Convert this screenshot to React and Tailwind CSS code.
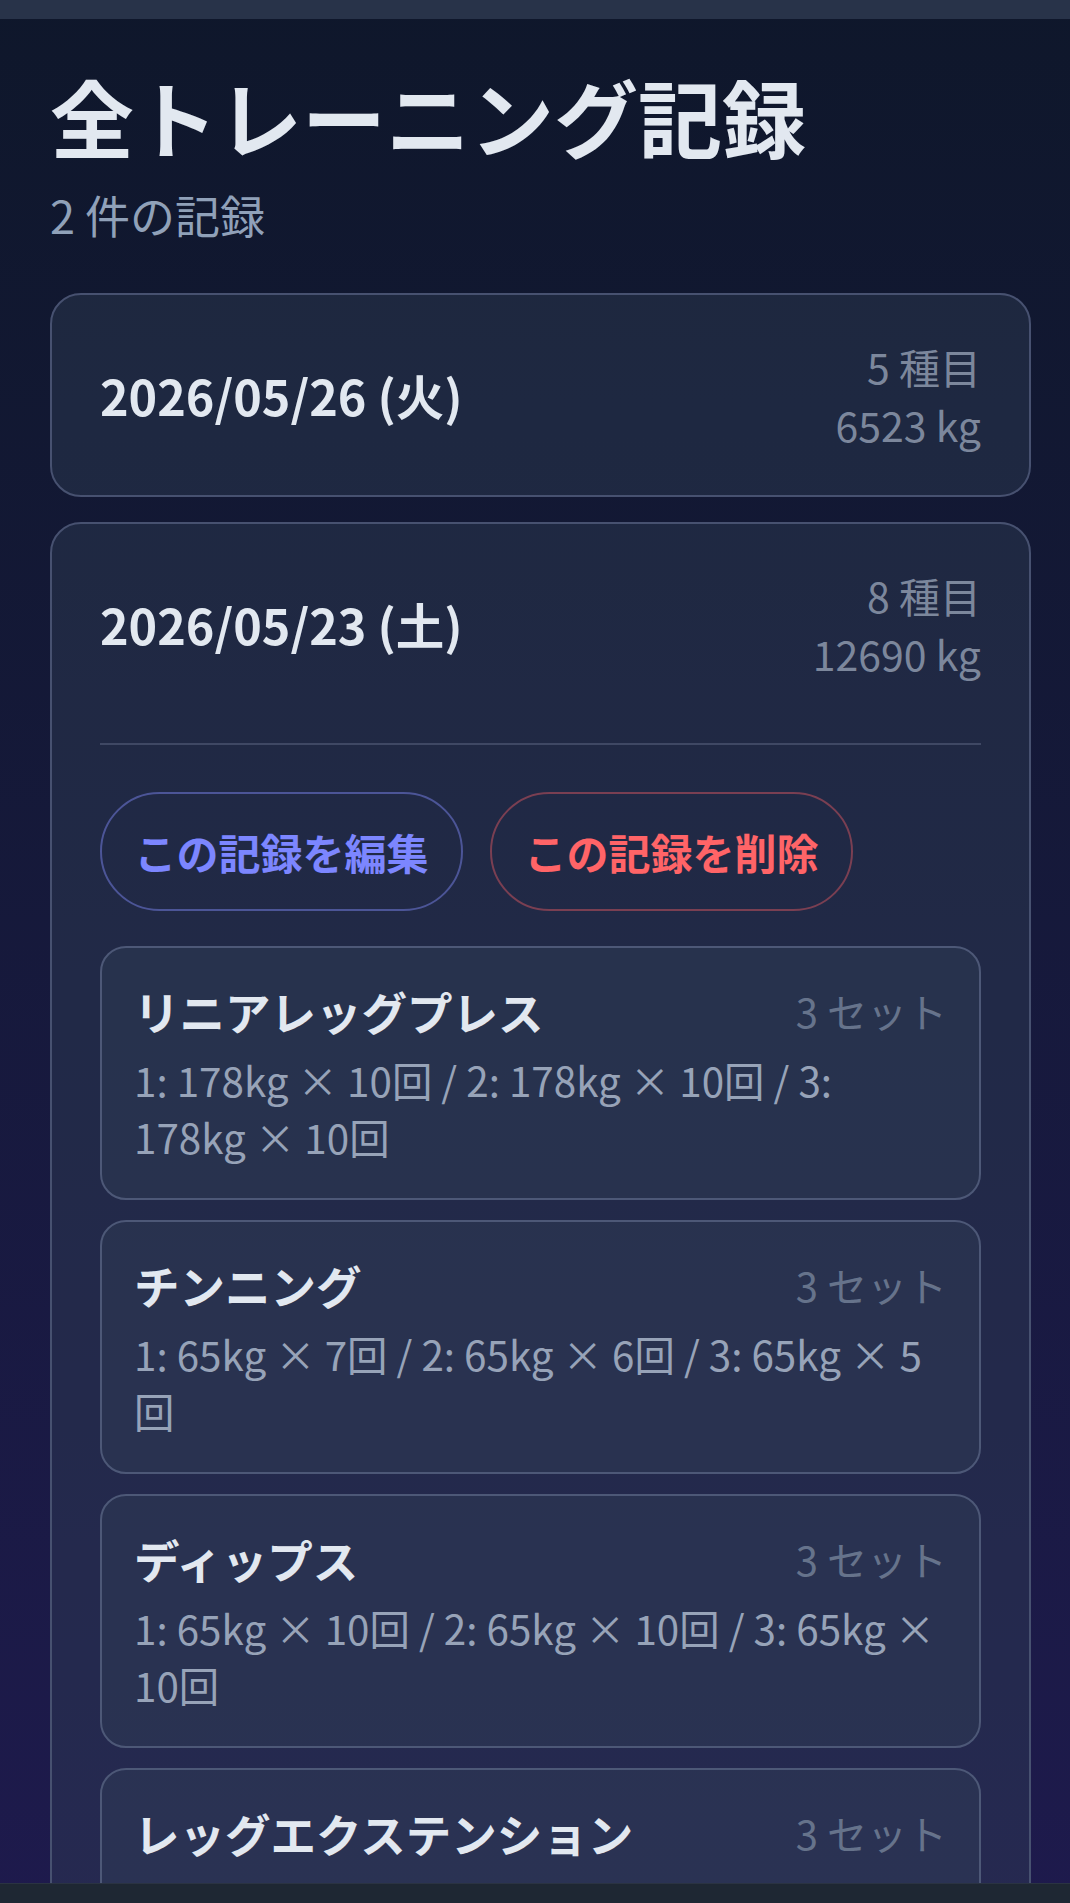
import React from "react";

const sessions = [
  {
    id: "2026-05-26",
    date: "2026/05/26 (火)",
    count: 5,
    volume: 6523,
    open: false,
    exercises: [],
  },
  {
    id: "2026-05-23",
    date: "2026/05/23 (土)",
    count: 8,
    volume: 12690,
    open: true,
    exercises: [
      {
        name: "リニアレッグプレス",
        sets: [
          [178, 10],
          [178, 10],
          [178, 10],
        ],
      },
      {
        name: "チンニング",
        sets: [
          [65, 7],
          [65, 6],
          [65, 5],
        ],
      },
      {
        name: "ディップス",
        sets: [
          [65, 10],
          [65, 10],
          [65, 10],
        ],
      },
      {
        name: "レッグエクステンション",
        sets: [
          [59, 12],
          [59, 12],
          [59, 10],
        ],
      },
    ],
  },
];

function ExerciseCard({ exercise }) {
  const line = exercise.sets
    .map(([kg, reps], i) => `${i + 1}: ${kg}kg × ${reps}回`)
    .join(" / ");
  return (
    <div className="rounded-[26px] border-2 border-[#4d5877] bg-slate-700/40 px-[32px] pt-[32px] pb-[33px]">
      <div className="mb-[9px] flex items-center justify-between">
        <h3 className="text-[45.5px] leading-[62px] font-bold text-slate-200">
          {exercise.name}
        </h3>
        <span className="text-[40px] leading-[62px] text-[#66738b]">
          {exercise.sets.length} セット
        </span>
      </div>
      <p className="text-[40.4px] leading-[57px] text-[#97a3b8]">{line}</p>
    </div>
  );
}

function SessionCard({ session }) {
  return (
    <div className="rounded-[31px] border-2 border-[#475170] bg-slate-700/40">
      <div className="flex items-center justify-between px-[48px] py-[42px]">
        <span className="text-[48.5px] leading-[72px] font-bold text-slate-200">
          {session.date}
        </span>
        <div className="text-right text-[41px] leading-[58px] text-[#7c879c]">
          <div>{session.count} 種目</div>
          <div>{session.volume} kg</div>
        </div>
      </div>
      {session.open && (
        <div className="mx-[48px] mt-[19px] border-t-2 border-[#3f4864] pt-[47px]">
          <div className="flex gap-[27px]">
            <button className="flex h-[119px] w-[363px] items-center justify-center rounded-full border-2 border-[#4c5597] text-[42px] font-bold text-indigo-400">
              この記録を編集
            </button>
            <button className="flex h-[119px] w-[363px] items-center justify-center rounded-full border-2 border-[#7a3f52] text-[42px] font-bold text-red-400">
              この記録を削除
            </button>
          </div>
          <div className="mt-[35px] flex flex-col gap-[20px]">
            {session.exercises.map((ex) => (
              <ExerciseCard key={ex.name} exercise={ex} />
            ))}
          </div>
        </div>
      )}
    </div>
  );
}

export default function App() {
  return (
    <div className="flex h-screen flex-col overflow-hidden bg-gradient-to-b from-slate-900 to-indigo-950 font-['Noto_Sans_CJK_JP','Noto_Sans',sans-serif]">
      <div className="h-[19px] shrink-0 bg-[#283349]" />
      <main className="flex-1 overflow-hidden pl-[50px] pr-[39px] pt-[46px]">
        <h1 className="text-[84px] leading-[101px] font-bold text-slate-200">
          全トレーニング記録
        </h1>
        <p className="mt-[17px] text-[45px] leading-[64px] text-slate-400">
          2 件の記録
        </p>
        <div className="mt-[46px] flex flex-col gap-[25px]">
          {sessions.map((s) => (
            <SessionCard key={s.id} session={s} />
          ))}
        </div>
      </main>
      <div className="h-[20px] shrink-0 border-t border-[#2a3342] bg-[#1e2733]" />
    </div>
  );
}
